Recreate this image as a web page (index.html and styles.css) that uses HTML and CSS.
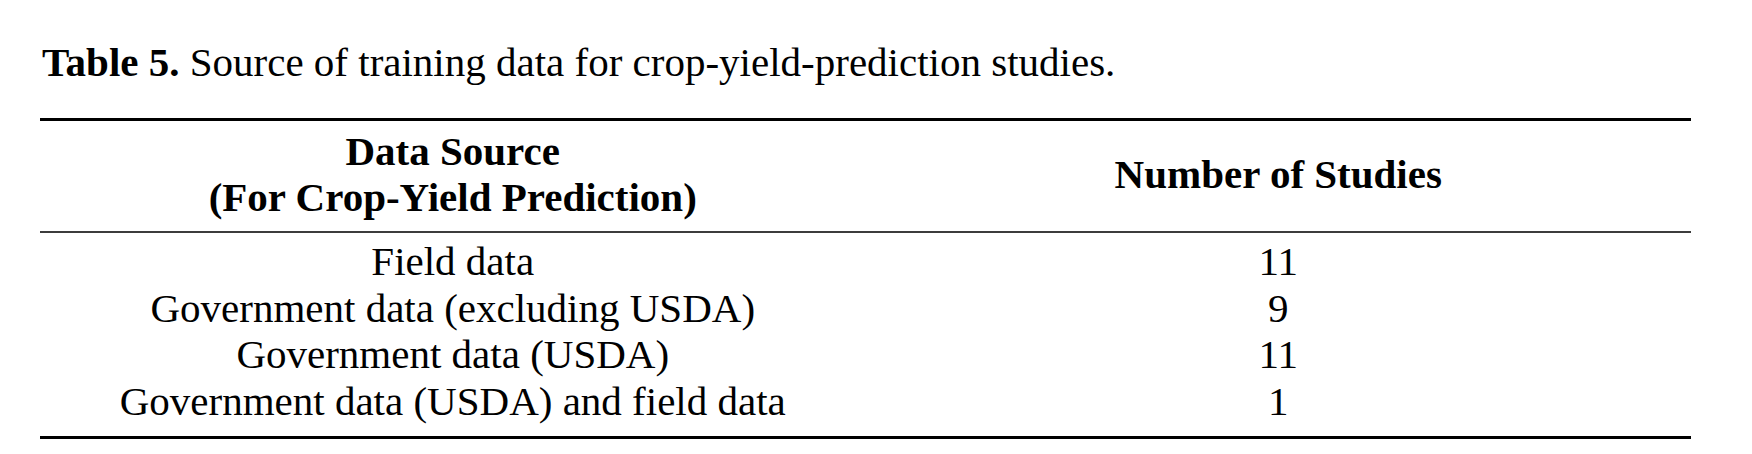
FILE: index.html
```html
<!DOCTYPE html>
<html lang="en">
<head>
<meta charset="utf-8">
<title>Table 5</title>
<link rel="stylesheet" href="styles.css">
</head>
<body>
<div class="page">
  <p class="caption"><b>Table 5.</b> Source of training data for crop-yield-prediction studies.</p>
  <table class="data">
    <thead>
      <tr>
        <th>Data Source<br>(For Crop-Yield Prediction)</th>
        <th>Number of Studies</th>
      </tr>
    </thead>
    <tbody>
      <tr><td>Field data</td><td>11</td></tr>
      <tr><td>Government data (excluding USDA)</td><td>9</td></tr>
      <tr><td>Government data (USDA)</td><td>11</td></tr>
      <tr><td>Government data (USDA) and field data</td><td>1</td></tr>
    </tbody>
  </table>
</div>
</body>
</html>
```

FILE: styles.css
```css
html, body {
  margin: 0;
  padding: 0;
  background: #ffffff;
}

body {
  font-family: "Liberation Serif", "Times New Roman", serif;
  color: #000000;
}

.page {
  padding-left: 40px;
  width: 1651px;
}

.caption {
  margin: 39px 0 0 2px;
  font-size: 41px;
  line-height: 46px;
}

.caption b {
  font-weight: bold;
}

.data {
  margin-top: 33px;
  width: 1651px;
  border-collapse: separate;
  border-spacing: 0;
  table-layout: fixed;
  border-top: 3px solid #000000;
  border-bottom: 3px solid #000000;
  font-size: 41px;
}

.data th {
  width: 50%;
  font-weight: bold;
  line-height: 46px;
  padding: 7px 0 11px;
  text-align: center;
  vertical-align: middle;
  border-bottom: 2px solid #3c3c3c;
}

.data td {
  padding: 0;
  line-height: 46.67px;
  text-align: center;
}

.data tbody tr:first-child td {
  padding-top: 5px;
}

.data tbody tr:last-child td {
  padding-bottom: 11px;
}
```
